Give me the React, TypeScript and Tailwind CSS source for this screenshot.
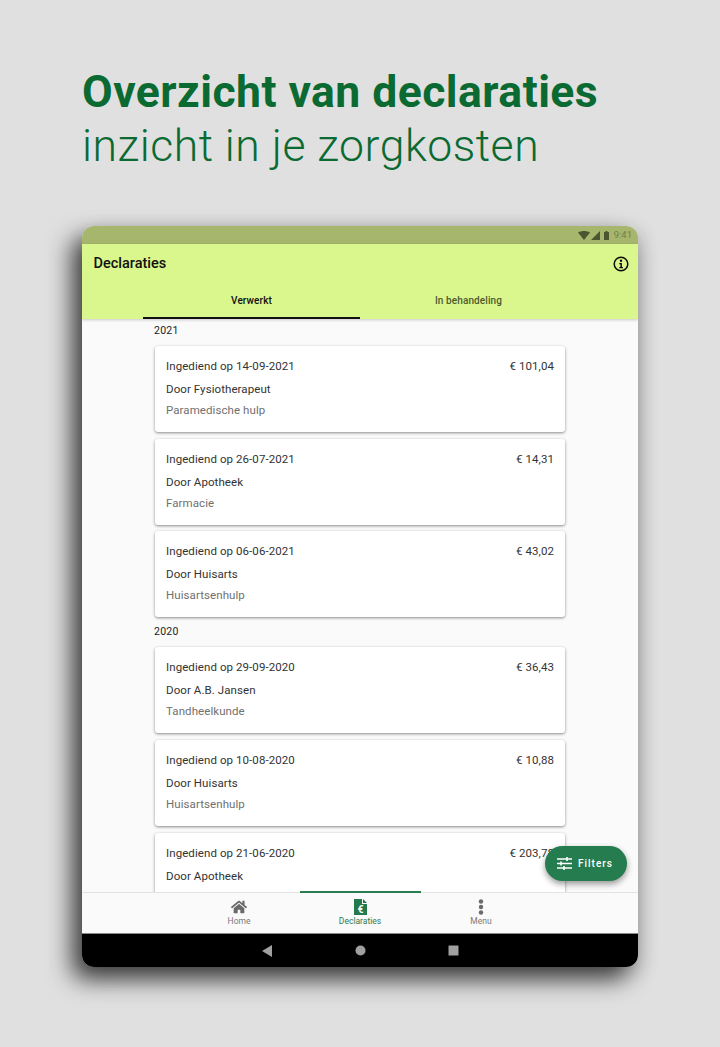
import React from "react";
import { FaHome } from "react-icons/fa";

type Claim = { date: string; amount: string; by: string; kind?: string };

const y2021: Claim[] = [
  { date: "14-09-2021", amount: "€ 101,04", by: "Door Fysiotherapeut", kind: "Paramedische hulp" },
  { date: "26-07-2021", amount: "€ 14,31", by: "Door Apotheek", kind: "Farmacie" },
  { date: "06-06-2021", amount: "€ 43,02", by: "Door Huisarts", kind: "Huisartsenhulp" },
];
const y2020: Claim[] = [
  { date: "29-09-2020", amount: "€ 36,43", by: "Door A.B. Jansen", kind: "Tandheelkunde" },
  { date: "10-08-2020", amount: "€ 10,88", by: "Door Huisarts", kind: "Huisartsenhulp" },
  { date: "21-06-2020", amount: "€ 203,78", by: "Door Apotheek" },
];

function Card({ c }: { c: Claim }) {
  return (
    <div className="h-[86px] shrink-0 rounded-[3px] bg-white px-[11px] pt-[12px] shadow-[0_1px_3px_rgba(0,0,0,0.45)]">
      <div className="flex justify-between text-[11.500px] leading-[16px] tracking-[0.08px] text-[#333]">
        <span>Ingediend op {c.date}</span>
        <span>{c.amount}</span>
      </div>
      <div className="mt-[7px] text-[11.500px] leading-[16px] tracking-[0.08px] text-[#333]">{c.by}</div>
      {c.kind && <div className="mt-[5px] text-[11.500px] leading-[16px] tracking-[0.08px] text-[#707070]">{c.kind}</div>}
    </div>
  );
}

function YearLabel({ y, className }: { y: string; className: string }) {
  return <div className={`text-[10.500px] font-normal leading-[12px] tracking-[0.25px] text-[#222] ${className}`}>{y}</div>;
}

export default function App() {
  return (
    <div className="relative h-[1047px] w-[720px] overflow-hidden bg-[#e0e0e0] font-['Roboto',sans-serif]">
      <div className="pl-[82px] pt-[66px] text-[#0b6a32]">
        <h1 className="text-[44.500px] font-bold leading-[53px] tracking-[0.45px]">Overzicht van declaraties</h1>
        <p className="text-[44.500px] font-light leading-[54px] tracking-[0.52px]">inzicht in je zorgkosten</p>
      </div>

      <div className="relative ml-[82px] mt-[53px] flex h-[741px] w-[556px] flex-col overflow-hidden rounded-[12px] bg-[#fafafa] shadow-[-10px_12px_24px_rgba(0,0,0,0.72),4px_6px_20px_rgba(0,0,0,0.14)]">
        <div className="flex h-[18px] shrink-0 items-center justify-end gap-[1px] bg-[#a6b66c] pr-[6px]">
          <svg width="12" height="9" viewBox="0 0 12 9"><path d="M0 1.5C3.5-.5 8.500-.5 12 1.500L6 9z" fill="#4c5432" /></svg>
          <svg width="9" height="9" viewBox="0 0 9 9"><path d="M9 0V9H0z" fill="#4c5432" /></svg>
          <svg width="7" height="9" viewBox="0 0 7 9" className="ml-[2px]"><path d="M2.500 0H4.500V1H6V9H1V1H2.500z" fill="#4c5432" /></svg>
          <span className="ml-[3px] text-[9.500px] leading-[10px] text-[#727e4a]">9:41</span>
        </div>

        <div className="relative z-10 h-[75px] shrink-0 bg-[#d9f78c] shadow-[0_1px_3px_rgba(0,0,0,0.2)]">
          <div className="flex h-[39px] items-center justify-between pl-[11.500px] pr-[9px] pt-[1px]">
            <span className="text-[14.500px] font-medium leading-[20px] text-[#111]">Declaraties</span>
            <svg width="16" height="16" viewBox="0 0 16 16" fill="none">
              <circle cx="8" cy="8" r="6.800" stroke="#0c0c0c" strokeWidth="1.500" />
              <circle cx="8" cy="4.800" r="1.200" fill="#0c0c0c" />
              <path d="M6.300 7H8.900V11H10V12.200H6.300V11H7.400V8.200H6.300z" fill="#0c0c0c" />
            </svg>
          </div>
          <div className="mx-[61px] flex h-[36px]">
            <div className="flex h-full w-[217px] items-start justify-center border-b-2 border-[#111] pt-[10px] text-[10px] font-medium leading-[16px] tracking-[0.1px] text-[#111]">
              Verwerkt
            </div>
            <div className="flex h-full w-[217px] items-start justify-center pt-[10px] text-[10px] font-medium leading-[16px] tracking-[0.1px] text-[#4c5a2e]">
              In behandeling
            </div>
          </div>
        </div>

        <div className="flex min-h-0 flex-1 flex-col overflow-hidden px-[73px]">
          <YearLabel y="2021" className="mb-[9px] ml-[-1px] mt-[6px]" />
          <div className="flex flex-col gap-[6.700px]">
            {y2021.map((c) => <Card key={c.date} c={c} />)}
          </div>
          <YearLabel y="2020" className="mb-[9px] ml-[-1px] mt-[9px]" />
          <div className="flex flex-col gap-[6.700px]">
            {y2020.map((c) => <Card key={c.date} c={c} />)}
          </div>
        </div>

        <div className="relative z-10 flex h-[41px] shrink-0 justify-center border-t border-[#e2e2e2] bg-[#fafafa]">
          <div className="flex w-[121px] flex-col items-center pt-[6px] text-[#7b7b7b]">
            <div className="flex h-[16px] items-center"><FaHome size={16} color="#6a6a6a" /></div>
            <span className="mt-[1px] text-[8.500px] leading-[10px]">Home</span>
          </div>
          <div className="relative flex w-[121px] flex-col items-center pt-[6px] text-[#2a7d50]">
            <div className="absolute left-0 right-0 top-[-2px] h-[2px] bg-[#2a7d50]" />
            <svg width="13" height="16" viewBox="0 0 13 16">
              <path d="M0 0H8V5H13V16H0z" fill="#237a4c" />
              <path d="M9 0L13 4H9z" fill="#237a4c" />
              <text x="6.500" y="14" fontSize="10" fontWeight="700" fill="#fff" textAnchor="middle" fontFamily="Roboto, sans-serif">€</text>
            </svg>
            <span className="mt-[1px] text-[8.500px] leading-[10px]">Declaraties</span>
          </div>
          <div className="flex w-[121px] flex-col items-center pt-[6px] text-[#7b7b7b]">
            <svg width="6" height="16" viewBox="0 0 6 16">
              <circle cx="3" cy="2.500" r="2.200" fill="#6a6a6a" />
              <circle cx="3" cy="8" r="2.200" fill="#6a6a6a" />
              <circle cx="3" cy="13.500" r="2.200" fill="#6a6a6a" />
            </svg>
            <span className="mt-[1px] text-[8.500px] leading-[10px]">Menu</span>
          </div>
        </div>

        <div className="flex h-[34px] shrink-0 items-center justify-center gap-[82px] border-t border-[#888] bg-black">
          <svg width="12" height="12" viewBox="0 0 12 12"><path d="M11 0V12L1 6z" fill="#a0a0a0" /></svg>
          <svg width="11" height="11" viewBox="0 0 11 11"><circle cx="5.500" cy="5.500" r="5" fill="#a0a0a0" /></svg>
          <svg width="11" height="11" viewBox="0 0 11 11"><rect x="0.500" y="0.500" width="10" height="10" rx="0.500" fill="#a0a0a0" /></svg>
        </div>

        <div className="absolute left-[463px] top-[620px] z-20 flex h-[35px] w-[82px] items-center rounded-full bg-[#257c4e] pl-[12px] text-white shadow-[0_3px_6px_rgba(0,0,0,0.4)]">
          <svg width="15" height="13" viewBox="0 0 15 13" fill="none" stroke="#fff" strokeWidth="1.400">
            <path d="M0 2H15M0 6.500H15M0 11H15" />
            <path d="M10 0V4M4 4.500V8.500M7 9V13" strokeWidth="1.600" />
          </svg>
          <span className="ml-[6px] text-[10px] font-medium leading-[12px] tracking-[1px]">Filters</span>
        </div>
      </div>
    </div>
  );
}
